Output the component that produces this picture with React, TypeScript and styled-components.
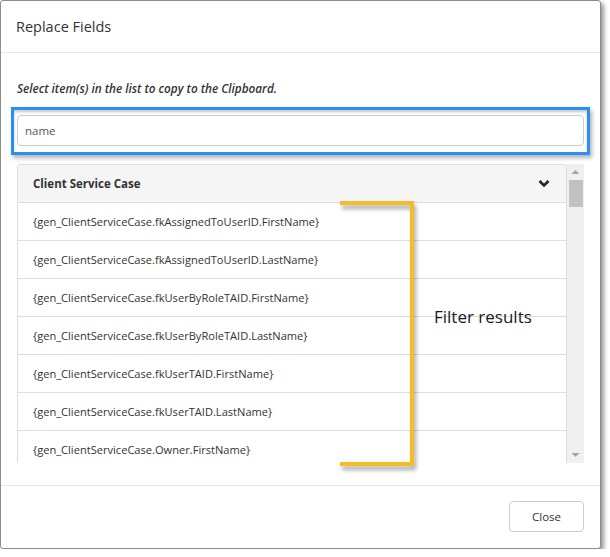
import React from 'react';
import styled, { createGlobalStyle } from 'styled-components';

const GlobalStyle = createGlobalStyle`
  html, body {
    margin: 0;
    padding: 0;
    background: #ffffff;
  }
  body {
    font-family: 'Open Sans', 'Noto Sans', sans-serif;
    color: #333333;
  }
`;

const fields = [
  '{gen_ClientServiceCase.fkAssignedToUserID.FirstName}',
  '{gen_ClientServiceCase.fkAssignedToUserID.LastName}',
  '{gen_ClientServiceCase.fkUserByRoleTAID.FirstName}',
  '{gen_ClientServiceCase.fkUserByRoleTAID.LastName}',
  '{gen_ClientServiceCase.fkUserTAID.FirstName}',
  '{gen_ClientServiceCase.fkUserTAID.LastName}',
  '{gen_ClientServiceCase.Owner.FirstName}',
];

const Dialog = styled.div`
  width: 599px;
  height: 547px;
  border: 1px solid #8c8c8c;
  border-radius: 3px;
  box-shadow: 3px 3px 4px rgba(0, 0, 0, 0.4);
  background: #fff;
  display: flex;
  flex-direction: column;
`;

const Header = styled.div`
  height: 51px;
  display: flex;
  align-items: center;
  padding: 0 15px;
  border-bottom: 1px solid #e5e5e5;
`;

const Title = styled.h4`
  margin: 0;
  font-size: 14.5px;
  font-weight: 400;
  color: #333;
`;

const Body = styled.div`
  flex: 1;
  padding: 26px 16px 0 16px;
  display: flex;
  flex-direction: column;
`;

const Hint = styled.p`
  margin: 0 0 10px 0;
  font-size: 11.75px;
  line-height: 18px;
  font-style: italic;
  font-weight: 600;
  color: #333;
`;

const Highlight = styled.div`
  margin: 0 -6px 0 -6px;
  border: 3px solid #2b8ff2;
  padding: 5px 3px 6px 3px;
  box-shadow: inset 0 2px 3px rgba(0, 0, 0, 0.22), 2px 3px 4px rgba(0, 0, 0, 0.3);
`;

const SearchInput = styled.input`
  display: block;
  box-sizing: border-box;
  width: 100%;
  height: 31px;
  border: 1px solid #cccccc;
  border-radius: 4px;
  padding: 0 7px;
  font-family: 'Open Sans', 'Noto Sans', sans-serif;
  font-size: 11.5px;
  color: #555;
  outline: none;
`;

const ListArea = styled.div`
  position: relative;
  margin-top: 9px;
  height: 299px;
  display: flex;
`;

const List = styled.div`
  flex: 1;
  overflow: hidden;
  border: 1px solid #dddddd;
  border-bottom: none;
  border-radius: 3px 3px 0 0;
`;

const GroupHeader = styled.div`
  height: 37px;
  display: flex;
  align-items: center;
  justify-content: space-between;
  padding: 0 16px 0 15px;
  background: #f5f5f5;
  border-bottom: 1px solid #dddddd;
  font-size: 11.5px;
  font-weight: 700;
  color: #333;
`;

const Row = styled.div`
  height: 37px;
  display: flex;
  align-items: center;
  padding-left: 15px;
  border-bottom: 1px solid #dddddd;
  font-size: 11.1px;
  color: #333;
  white-space: nowrap;
`;

const ScrollTrack = styled.div`
  width: 17px;
  background: #f0f0f0;
  display: flex;
  flex-direction: column;
  align-items: center;
`;

const ScrollArrow = styled.div`
  height: 16px;
  display: flex;
  align-items: center;
  justify-content: center;
`;

const ScrollThumb = styled.div`
  width: 14px;
  height: 27px;
  background: #c1c1c1;
`;

const ScrollSpacer = styled.div`
  flex: 1;
`;

const Bracket = styled.div`
  position: absolute;
  left: 323px;
  top: 37px;
  width: 70px;
  height: 257px;
  border: 4px solid #f4bd23;
  border-left: none;
  filter: drop-shadow(2px 4px 2px rgba(0, 0, 0, 0.35));
`;

const Annotation = styled.div`
  position: absolute;
  left: 417px;
  top: 141px;
  font-size: 17px;
  color: #1a1a1a;
`;

const Footer = styled.div`
  margin-top: 21px;
  height: 63px;
  border-top: 1px solid #e5e5e5;
  display: flex;
  justify-content: flex-end;
  align-items: flex-start;
  padding: 15px 16px 0 0;
  box-sizing: border-box;
`;

const CloseButton = styled.button`
  width: 75px;
  height: 31px;
  background: #fff;
  border: 1px solid #cccccc;
  border-radius: 4px;
  font-family: 'Open Sans', 'Noto Sans', sans-serif;
  font-size: 11.5px;
  color: #333;
  cursor: pointer;
`;

const Chevron = () => (
  <svg width="12" height="9" viewBox="0 0 12 9">
    <polyline points="1.5,2 6,6.5 10.5,2" fill="none" stroke="#222" strokeWidth="2.6" />
  </svg>
);

const Triangle = ({ up }: { up?: boolean }) => (
  <svg width="9" height="6" viewBox="0 0 9 6">
    <polygon points={up ? '0.5,5 4.5,1 8.5,5' : '0.5,1 4.5,5 8.5,1'} fill="#a3a3a3" />
  </svg>
);

export default function App() {
  return (
    <>
      <GlobalStyle />
      <Dialog>
        <Header>
          <Title>Replace Fields</Title>
        </Header>
        <Body>
          <Hint>Select item(s) in the list to copy to the Clipboard.</Hint>
          <Highlight>
            <SearchInput defaultValue="name" />
          </Highlight>
          <ListArea>
            <List>
              <GroupHeader>
                Client Service Case
                <Chevron />
              </GroupHeader>
              {fields.map((f) => (
                <Row key={f}>{f}</Row>
              ))}
            </List>
            <ScrollTrack>
              <ScrollArrow>
                <Triangle up />
              </ScrollArrow>
              <ScrollThumb />
              <ScrollSpacer />
              <ScrollArrow>
                <Triangle />
              </ScrollArrow>
            </ScrollTrack>
            <Bracket />
            <Annotation>Filter results</Annotation>
          </ListArea>
        </Body>
        <Footer>
          <CloseButton>Close</CloseButton>
        </Footer>
      </Dialog>
    </>
  );
}
